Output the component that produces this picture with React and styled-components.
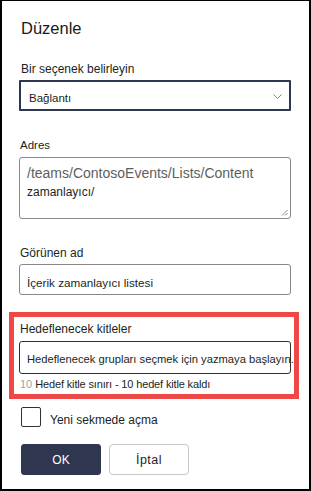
import React from "react";
import styled, { createGlobalStyle } from "styled-components";

const Global = createGlobalStyle`
  *, *::before, *::after { box-sizing: border-box; }
  html, body { margin: 0; padding: 0; background: #fff; }
  body { font-family: "Liberation Sans", Arial, sans-serif; color: #1b1a19; }
`;

const Panel = styled.div`
  width: 311px;
  height: 491px;
  border: 2px solid #000;
  border-top-width: 1px;
  padding: 17px 18px 0 17px;
  display: flex;
  flex-direction: column;
  overflow: hidden;
`;

const Title = styled.h1`
  margin: 0 0 0 2px;
  font-size: 16.5px;
  line-height: 20px;
  font-weight: 400;
  color: #1b1a19;
`;

const Label = styled.div`
  font-size: ${(p) => p.$size || 12}px;
  line-height: 16px;
  margin-top: ${(p) => p.$mt || 0}px;
  margin-left: ${(p) => p.$ml ?? 2}px;
  color: #201f1e;
  white-space: nowrap;
`;

const Dropdown = styled.div`
  margin-top: 3px;
  height: 31px;
  border: 2px solid #2e3650;
  border-radius: 1px;
  display: flex;
  align-items: flex-start;
  padding: 9px 7px 0 8px;
`;

const DropText = styled.span`
  font-size: 11.5px;
  line-height: 14px;
  color: #201f1e;
`;

const Chevron = styled.svg`
  margin-left: auto;
  margin-top: 3px;
`;

const TextArea = styled.div`
  position: relative;
  margin-top: 4px;
  height: 62px;
  border: 1px solid #8a8886;
  border-radius: 3px;
  padding: 6px 0 0 7px;
`;

const AreaLine = styled.div`
  font-size: ${(p) => p.$size}px;
  line-height: ${(p) => p.$lh}px;
  color: ${(p) => p.$color};
  margin-top: ${(p) => p.$mt || 0}px;
  white-space: nowrap;
`;

const Grip = styled.svg`
  position: absolute;
  right: 2px;
  bottom: 2px;
`;

const Input = styled.div`
  margin-top: ${(p) => p.$mt || 3}px;
  height: ${(p) => p.$h || 31}px;
  border: 1px solid ${(p) => p.$border || "#8a8886"};
  border-radius: 3px;
  padding: ${(p) => p.$pt || 11}px 0 0 7px;
  font-size: ${(p) => p.$size || 11.7}px;
  line-height: 14px;
  color: #201f1e;
  white-space: nowrap;
  overflow: visible;
`;

const Highlight = styled.div`
  margin: 17px -8px 0 -10px;
  border: 5px solid #f04747;
  padding: 4px 3px 3px 5px;
  display: flex;
  flex-direction: column;
`;

const Hint = styled.div`
  margin-top: 3px;
  margin-left: 1px;
  font-size: 11px;
  line-height: 14px;
  letter-spacing: -0.15px;
  color: #201f1e;
  white-space: nowrap;
`;

const Count = styled.span`
  color: #a19f9d;
  letter-spacing: 0;
  margin-right: 3px;
`;

const CheckRow = styled.label`
  margin-top: 8px;
  display: flex;
  align-items: flex-start;
  gap: 9px;
  padding-left: 2px;
`;

const Box = styled.span`
  width: 20px;
  height: 20px;
  border: 1px solid #323130;
  border-radius: 2px;
  flex: none;
`;

const CheckText = styled.span`
  margin-top: 5px;
  font-size: 12px;
  line-height: 16px;
  color: #201f1e;
`;

const Buttons = styled.div`
  margin-top: 16px;
  display: flex;
  gap: 8px;
  padding-left: 2px;
`;

const Button = styled.button`
  width: 80px;
  height: 31px;
  border-radius: ${(p) => (p.$primary ? 3 : 4)}px;
  border: 1px solid ${(p) => (p.$primary ? "#2e3650" : "#c8c6c4")};
  background: ${(p) => (p.$primary ? "#2e3650" : "#fff")};
  color: ${(p) => (p.$primary ? "#fff" : "#201f1e")};
  font-family: "Liberation Sans", Arial, sans-serif;
  font-size: ${(p) => (p.$primary ? 12 : 12.5)}px;
  letter-spacing: ${(p) => p.$ls || 0}px;
  padding: 0;
  cursor: pointer;
`;

export default function App() {
  return (
    <>
      <Global />
      <Panel>
        <Title>Düzenle</Title>

        <Label $mt={23}>Bir seçenek belirleyin</Label>
        <Dropdown>
          <DropText>Bağlantı</DropText>
          <Chevron width="9" height="5" viewBox="0 0 9 5">
            <path d="M0.5 0.5 L4.5 4.5 L8.5 0.5" fill="none" stroke="#8a8886" strokeWidth="1" />
          </Chevron>
        </Dropdown>

        <Label $mt={26} $size={11.5} $ml={1}>Adres</Label>
        <TextArea>
          <AreaLine $size={14} $lh={18} $color="#605e5c">/teams/ContosoEvents/Lists/Content</AreaLine>
          <AreaLine $size={12} $lh={16} $color="#201f1e" $mt={2}>zamanlayıcı/</AreaLine>
          <Grip width="7" height="7" viewBox="0 0 7 7">
            <path d="M6.5 1 L1 6.5 M6.5 4 L4 6.5" stroke="#8a8886" strokeWidth="1" />
          </Grip>
        </TextArea>

        <Label $mt={26} $ml={1}>Görünen ad</Label>
        <Input>İçerik zamanlayıcı listesi</Input>

        <Highlight>
          <Label $ml={1}>Hedeflenecek kitleler</Label>
          <Input $mt={4} $h={33} $border="#323130" $pt={10} $size={11.2}>
            Hedeflenecek grupları seçmek için yazmaya başlayın.
          </Input>
          <Hint>
            <Count>10</Count>Hedef kitle sınırı - 10 hedef kitle kaldı
          </Hint>
        </Highlight>

        <CheckRow>
          <Box />
          <CheckText>Yeni sekmede açma</CheckText>
        </CheckRow>

        <Buttons>
          <Button $primary>OK</Button>
          <Button $ls={0.5}>İptal</Button>
        </Buttons>
      </Panel>
    </>
  );
}
